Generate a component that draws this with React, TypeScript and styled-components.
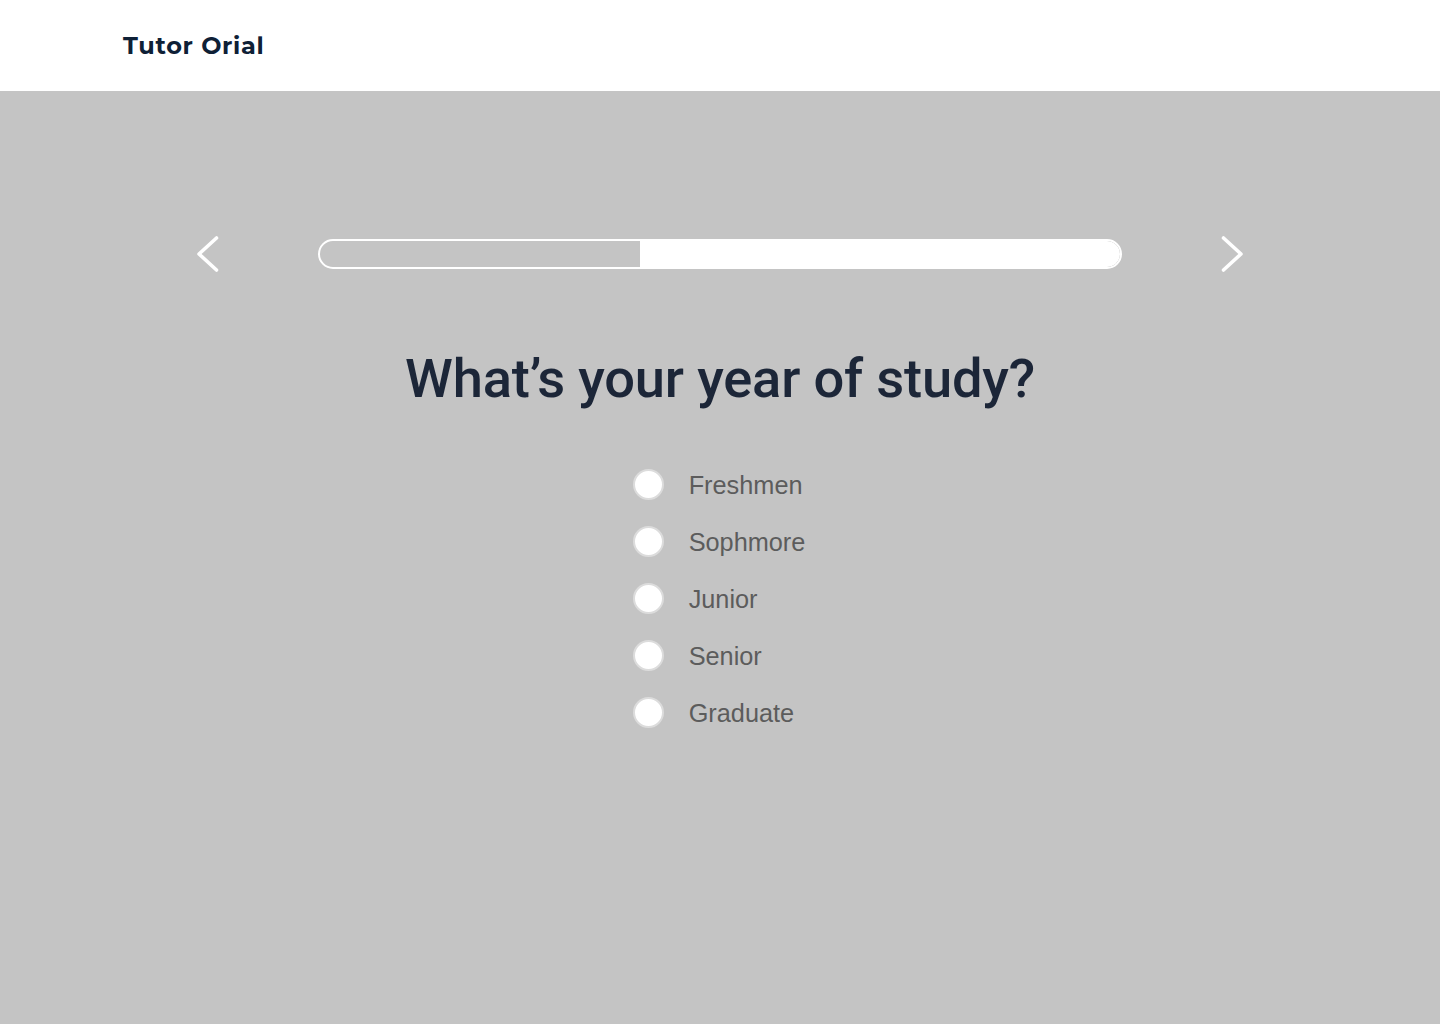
import styled, { createGlobalStyle } from "styled-components";
import { useState } from "react";

const GlobalStyle = createGlobalStyle`
  html, body {
    margin: 0;
    padding: 0;
    background: #c4c4c4;
  }
  * {
    box-sizing: border-box;
  }
`;

const Page = styled.div`
  min-height: 1024px;
  display: flex;
  flex-direction: column;
  background: #c4c4c4;
`;

const Header = styled.header`
  height: 91px;
  background: #ffffff;
  display: flex;
  align-items: center;
  padding-left: 123px;
`;

const Logo = styled.div`
  font-family: "Montserrat", Lato, "Open Sans", sans-serif;
  font-weight: 700;
  font-size: 24px;
  letter-spacing: 0.7px;
  color: #0e2036;
  margin-top: -1px;
`;

const Main = styled.main`
  display: flex;
  flex-direction: column;
  align-items: center;
  padding-top: 143px;
`;

const ProgressRow = styled.div`
  display: flex;
  align-items: center;
  gap: 95px;
`;

const ArrowButton = styled.button`
  width: 30px;
  height: 40px;
  padding: 0;
  border: none;
  background: transparent;
  cursor: pointer;
  display: flex;
  align-items: center;
  justify-content: center;
`;

const Track = styled.div`
  width: 804px;
  height: 30px;
  border: 2px solid #ffffff;
  border-radius: 15px;
  overflow: hidden;
  display: flex;
  justify-content: flex-end;
`;

const Fill = styled.div`
  height: 100%;
  background: #ffffff;
  border-radius: 0 15px 15px 0;
`;

const Question = styled.h1`
  margin: 74px 0 0;
  font-family: Roboto, "Noto Sans", sans-serif;
  font-weight: 500;
  font-size: 54.3px;
  line-height: 62px;
  color: #1c2638;
  letter-spacing: -0.2px;
`;

const Options = styled.div`
  margin-top: 59px;
  display: flex;
  flex-direction: column;
  gap: 26px;
  margin-right: 2px;
`;

const Option = styled.label`
  display: flex;
  align-items: center;
  gap: 25px;
  cursor: pointer;
`;

const Radio = styled.span<{ checked: boolean }>`
  width: 31px;
  height: 31px;
  border-radius: 50%;
  background: #ffffff;
  border: 2px solid #dcdcdc;
  display: flex;
  align-items: center;
  justify-content: center;
  &::after {
    content: "";
    width: 13px;
    height: 13px;
    border-radius: 50%;
    background: ${props => (props.checked ? "#1c2638" : "transparent")};
  }
`;

const OptionText = styled.span`
  font-family: "Liberation Sans", Arial, sans-serif;
  font-size: 25.3px;
  line-height: 30px;
  color: #5c5c5c;
`;

const years = ["Freshmen", "Sophmore", "Junior", "Senior", "Graduate"];

function Chevron({ left }: { left?: boolean }) {
  return (
    <svg width="26" height="38" viewBox="0 0 26 38" fill="none">
      <path
        d={left ? "M21.5 3 L4 19 L21.5 35" : "M4.5 3 L22 19 L4.5 35"}
        stroke="#ffffff"
        strokeWidth="3.6"
        strokeLinecap="round"
        strokeLinejoin="round"
      />
    </svg>
  );
}

function App() {
  const [selected, setSelected] = useState<string | null>(null);
  const progress = 60;

  return (
    <Page>
      <GlobalStyle />
      <Header>
        <Logo>Tutor Orial</Logo>
      </Header>
      <Main>
        <ProgressRow>
          <ArrowButton aria-label="Previous">
            <Chevron left />
          </ArrowButton>
          <Track>
            <Fill style={{ width: `${progress}%` }} />
          </Track>
          <ArrowButton aria-label="Next">
            <Chevron />
          </ArrowButton>
        </ProgressRow>
        <Question>What’s your year of study?</Question>
        <Options>
          {years.map(year => (
            <Option key={year} onClick={() => setSelected(year)}>
              <Radio checked={selected === year} />
              <OptionText>{year}</OptionText>
            </Option>
          ))}
        </Options>
      </Main>
    </Page>
  );
}

export default App;
